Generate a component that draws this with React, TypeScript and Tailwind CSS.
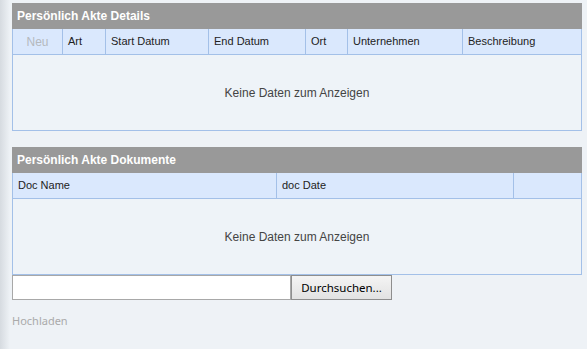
import React from 'react';

const detailCols = [
  { label: 'Neu', w: 'w-[50px]', muted: true, center: true },
  { label: 'Art', w: 'w-[43px]' },
  { label: 'Start Datum', w: 'w-[103px]' },
  { label: 'End Datum', w: 'w-[97px]' },
  { label: 'Ort', w: 'w-[42px]' },
  { label: 'Unternehmen', w: 'w-[115px]' },
  { label: 'Beschreibung', w: 'flex-1' },
];

const docCols = [
  { label: 'Doc Name', w: 'w-[264px]' },
  { label: 'doc Date', w: 'w-[237px]' },
  { label: '', w: 'flex-1' },
];

type Col = { label: string; w: string; muted?: boolean; center?: boolean };

const Panel = ({ title, cols }: { title: string; cols: Col[] }) => (
  <div className="flex flex-col">
    <div className="h-[26px] bg-[#999999] px-[5px] flex items-center text-[12px] font-bold text-white">
      {title}
    </div>
    <div className="border border-[#a3c0e8] border-t-0">
      <div className="h-[26px] flex bg-[#dae8fd] border-b border-[#a3c0e8]">
        {cols.map((c, i) => (
          <div
            key={i}
            className={`${c.w} flex items-center px-[5px] text-[11px] ${
              i < cols.length - 1 ? 'border-r border-[#a3c0e8]' : ''
            } ${c.muted ? 'text-[#b5b9be] justify-center text-[12px]' : 'text-[#222]'}`}
          >
            {c.label}
          </div>
        ))}
      </div>
      <div className="h-[75px] bg-[#eef3f8] flex items-center justify-center text-[12px] text-[#444]">
        Keine Daten zum Anzeigen
      </div>
    </div>
  </div>
);

const App = () => {
  return (
    <div
      className="w-[587px] h-[349px] bg-[linear-gradient(to_right,#d6dbe0,#eef2f6_10px)] pl-[12px] pr-[5px] pt-[3px]"
      style={{ fontFamily: '"Liberation Sans", Arial, sans-serif' }}
    >
      <Panel title="Persönlich Akte Details" cols={detailCols} />
      <div className="h-[16px]" />
      <Panel title="Persönlich Akte Dokumente" cols={docCols} />
      <div className="flex h-[25px]">
        <div className="w-[279px] bg-white border border-[#a8a8a8]" />
        <button
          className="w-[101px] bg-[linear-gradient(#f4f4f4,#e2e2e2)] border border-[#8e8e8e] text-[11.5px] text-black"
          style={{ fontFamily: '"Noto Sans", Tahoma, sans-serif' }}
        >
          Durchsuchen...
        </button>
      </div>
      <div
        className="mt-[13px] text-[11px] text-[#aaaaaa]"
        style={{ fontFamily: '"Noto Sans", Tahoma, sans-serif' }}
      >
        Hochladen
      </div>
    </div>
  );
};

export default App;
